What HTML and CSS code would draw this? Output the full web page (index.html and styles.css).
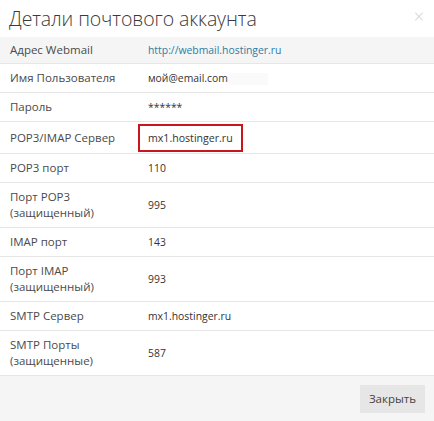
FILE: index.html
```html
<!DOCTYPE html>
<html>
<head>
<meta charset="utf-8">
<link rel="stylesheet" href="styles.css">
</head>
<body>
<div class="modal">
  <div class="header">
    <h1 class="title">Детали почтового аккаунта</h1>
    <span class="close">&times;</span>
  </div>
  <div class="rows">
    <div class="row first"><div class="label">Адрес Webmail</div><div class="value"><a class="link">http://webmail.hostinger.ru</a></div></div>
    <div class="row"><div class="label">Имя Пользователя</div><div class="value">мой@email.com<span class="redact"></span></div></div>
    <div class="row"><div class="label">Пароль</div><div class="value">******</div></div>
    <div class="row hl"><div class="label">POP3/IMAP Сервер</div><div class="value"><span class="box">mx1.hostinger.ru</span></div></div>
    <div class="row"><div class="label">POP3 порт</div><div class="value">110</div></div>
    <div class="row"><div class="label">Порт POP3<br>(защищенный)</div><div class="value">995</div></div>
    <div class="row"><div class="label">IMAP порт</div><div class="value">143</div></div>
    <div class="row"><div class="label">Порт IMAP<br>(защищенный)</div><div class="value">993</div></div>
    <div class="row"><div class="label">SMTP Сервер</div><div class="value">mx1.hostinger.ru</div></div>
    <div class="row"><div class="label">SMTP Порты<br>(защищенные)</div><div class="value">587</div></div>
  </div>
  <div class="footer">
    <button class="btn">Закрыть</button>
  </div>
</div>
</body>
</html>
```
FILE: styles.css
```css
html, body {
  margin: 0;
  padding: 0;
  background: #fff;
}
body {
  font-family: "Open Sans", "DejaVu Sans", sans-serif;
  color: #444;
}
.modal {
  width: 434px;
  height: 421px;
  display: flex;
  flex-direction: column;
}
.header {
  height: 37px;
  display: flex;
  align-items: center;
  justify-content: space-between;
  padding: 0 10px 0 9px;
  box-sizing: border-box;
}
.title {
  margin: 0;
  font-size: 19.5px;
  font-weight: 300;
  color: #3a3a3a;
  letter-spacing: -0.1px;
}
.close {
  color: #d0d0d0;
  font-size: 18px;
  font-weight: 300;
  line-height: 1;
  margin-top: -6px;
}
.rows {
  display: flex;
  flex-direction: column;
}
.row {
  display: flex;
  align-items: center;
  border-bottom: 1px solid #e6e6e6;
  padding: 6px 0;
  font-size: 11.5px;
  line-height: 16px;
}
.row.first {
  background: #f5f5f5;
  padding: 5px 0;
}
.row.hl {
  padding: 7px 0 6px;
}
.label {
  width: 138px;
  padding-left: 10px;
  box-sizing: border-box;
  flex: none;
  color: #4a4a4a;
}
.value {
  padding-left: 10px;
  color: #333;
  font-size: 10.4px;
}
.row.hl .value {
  padding-left: 0;
}
.link {
  color: #2c7da6;
  text-decoration: none;
}
.redact {
  display: inline-block;
  width: 40px;
  height: 12px;
  background: #fafafa;
  vertical-align: middle;
}
.box {
  display: inline-block;
  border: 2px solid #c8161d;
  padding: 4px 8px;
  line-height: 16px;
  margin: -5px 0;
  font-size: 10.6px;
}
.footer {
  flex: 1;
  background: #f5f5f5;
  display: flex;
  align-items: center;
  justify-content: flex-end;
  padding-right: 9px;
}
.btn {
  font-family: "Open Sans", "DejaVu Sans", sans-serif;
  font-size: 11.5px;
  color: #444;
  background: #e6e6e6;
  border: none;
  padding: 0 9px;
  height: 28px;
}
```
